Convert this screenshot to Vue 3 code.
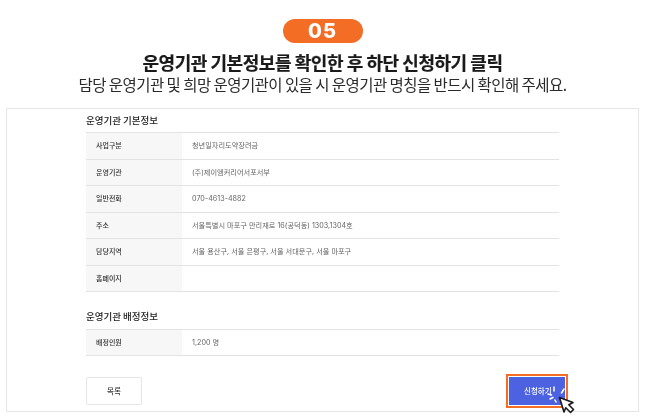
<script setup>
const basic = [
  ['사업구분', '청년일자리도약장려금'],
  ['운영기관', '(주)제이엠커리어서포서부'],
  ['일반전화', '070-4613-4882'],
  ['주소', '서울특별시 마포구 만리재로 16(공덕동) 1303,1304호'],
  ['담당지역', '서울 용산구, 서울 은평구, 서울 서대문구, 서울 마포구'],
  ['홈페이지', ''],
]
const quota = [['배정인원', '1,200 명']]
</script>

<template>
  <main class="page">
    <header class="head">
      <div class="badge">05</div>
      <h1 class="title">운영기관 기본정보를 확인한 후 하단 신청하기 클릭</h1>
      <p class="sub">담당 운영기관 및 희망 운영기관이 있을 시 운영기관 명칭을 반드시 확인해 주세요.</p>
    </header>
    <section class="frame">
      <h2 class="sec first">운영기관 기본정보</h2>
      <div class="table">
        <div v-for="r in basic" :key="r[0]" class="row">
          <div class="th">{{ r[0] }}</div>
          <div class="td">{{ r[1] }}</div>
        </div>
      </div>
      <h2 class="sec second">운영기관 배정정보</h2>
      <div class="table">
        <div v-for="r in quota" :key="r[0]" class="row">
          <div class="th">{{ r[0] }}</div>
          <div class="td">{{ r[1] }}</div>
        </div>
      </div>
      <div class="actions">
        <button class="list">목록</button>
        <div class="applywrap">
          <button class="apply">신청하기</button>
          <svg class="cursor" width="32" height="32" viewBox="0 0 32 32">
            <g stroke="#fff" stroke-width="1.500" stroke-linecap="round">
              <path d="M8 3V7M18 5L15.500 9M2 10L5.500 11M4 15L7 13.500M9 16L10 18" />
            </g>
            <path d="M13.500 13.500L27 18.500L22.800 20.800L27.500 25.500L24.500 28.500L19.800 23.800L18 28Z" fill="#fff" stroke="#1a1a1a" stroke-width="1.600" stroke-linejoin="round" />
          </svg>
        </div>
      </div>
    </section>
  </main>
</template>

<style scoped>
.page {
  width: 645px;
  height: 416px;
  overflow: hidden;
  background: #fff;
  font-family: "Noto Sans CJK KR", "Noto Sans", sans-serif;
  box-sizing: border-box;
  padding-top: 19px;
  filter: blur(0.3px);
}
.head {
  display: flex;
  flex-direction: column;
  align-items: center;
}
.badge {
  width: 80px;
  height: 24px;
  border-radius: 12px;
  background: #f46d25;
  color: #fff;
  font: 800 20px/24px "Inter", sans-serif;
  letter-spacing: 1px;
  text-align: center;
}
.title {
  margin: 7px 0 0;
  font-size: 18px;
  line-height: 25px;
  font-weight: 700;
  color: #1a1a1a;
  letter-spacing: -0.450px;
  -webkit-text-stroke: 0.2px #1a1a1a;
  white-space: nowrap;
}
.sub {
  margin: 0;
  font-size: 15.500px;
  line-height: 18px;
  font-weight: 400;
  color: #2a2a2a;
  letter-spacing: -0.560px;
  white-space: nowrap;
}
.frame {
  margin: 15px 6px 0;
  height: 304px;
  box-sizing: border-box;
  border: 1px solid #e6e6e6;
  padding: 0 79px;
  display: flex;
  flex-direction: column;
}
.sec {
  margin: 0;
  font-size: 9.500px;
  line-height: 14px;
  font-weight: 500;
  color: #222;
}
.first { padding: 3.500px 0 5.500px; }
.second { padding: 17px 0 5.500px; }
.table {
  border-top: 1px solid #e3e3e3;
}
.row {
  display: flex;
  box-sizing: border-box;
  height: 26.500px;
  border-bottom: 1px solid #e3e3e3;
  line-height: 25.500px;
}
.th {
  width: 96px;
  box-sizing: border-box;
  padding-left: 10px;
  background: #f7f7f7;
  color: #333;
  font-size: 7px;
  font-weight: 500;
}
.td {
  flex: 1;
  padding-left: 10px;
  font-family: "Inter", "Noto Sans CJK KR", sans-serif;
  font-size: 7.200px;
  color: #666;
}
.actions {
  display: flex;
  justify-content: space-between;
  align-items: flex-start;
  margin-top: 17.500px;
}
.list {
  margin-top: 3px;
  width: 56px;
  height: 28px;
  background: #fff;
  border: 1px solid #e6e6e6;
  border-radius: 2px;
  font: 500 7.500px "Noto Sans CJK KR", sans-serif;
  color: #333;
  padding: 0;
}
.applywrap {
  position: relative;
  margin-right: -9px;
}
.apply {
  display: block;
  width: 62px;
  height: 34px;
  box-sizing: border-box;
  background: #4c62e0;
  border: 2px solid #f46d25;
  box-shadow: inset 0 0 0 1px #fff;
  color: #fff;
  font: 500 7.500px "Noto Sans CJK KR", sans-serif;
  text-align: left;
  padding: 0 0 0 16px;
}
.cursor {
  position: absolute;
  left: 40px;
  top: 10px;
}
</style>

<style>
html, body { margin: 0; background: #fff; }
</style>
